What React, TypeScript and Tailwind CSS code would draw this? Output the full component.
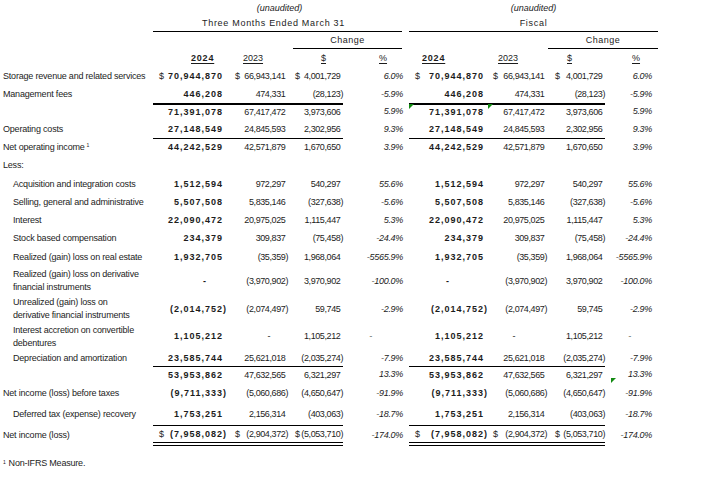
import React from 'react';

type Row = {
  label: string[];
  vals?: string[]; // a, b, c, d
  dollar?: boolean;
  indent?: boolean;
  sup?: boolean;
  h: string;
  top?: 'thin' | 'thick';
  double?: boolean;
};

const rows: Row[] = [
  { label: ['Storage revenue and related services'], vals: ['70,944,870', '66,943,141', '4,001,729', '6.0%'], dollar: true, h: 'h-[18px]' },
  { label: ['Management fees'], vals: ['446,208', '474,331', '(28,123)', '-5.9%'], h: 'h-[18px]' },
  { label: [''], vals: ['71,391,078', '67,417,472', '3,973,606', '5.9%'], h: 'h-[17px]', top: 'thick' },
  { label: ['Operating costs'], vals: ['27,148,549', '24,845,593', '2,302,956', '9.3%'], h: 'h-[18px]' },
  { label: ['Net operating income'], sup: true, vals: ['44,242,529', '42,571,879', '1,670,650', '3.9%'], h: 'h-[18px]', top: 'thin' },
  { label: ['Less:'], h: 'h-[19px]' },
  { label: ['Acquisition and integration costs'], indent: true, vals: ['1,512,594', '972,297', '540,297', '55.6%'], h: 'h-[18px]' },
  { label: ['Selling, general and administrative'], indent: true, vals: ['5,507,508', '5,835,146', '(327,638)', '-5.6%'], h: 'h-[18px]' },
  { label: ['Interest'], indent: true, vals: ['22,090,472', '20,975,025', '1,115,447', '5.3%'], h: 'h-[18px]' },
  { label: ['Stock based compensation'], indent: true, vals: ['234,379', '309,837', '(75,458)', '-24.4%'], h: 'h-[18px]' },
  { label: ['Realized (gain) loss on real estate'], indent: true, vals: ['1,932,705', '(35,359)', '1,968,064', '-5565.9%'], h: 'h-[20px]' },
  { label: ['Realized (gain) loss on derivative', 'financial instruments'], indent: true, vals: ['-', '(3,970,902)', '3,970,902', '-100.0%'], h: 'h-[28px]' },
  { label: ['Unrealized (gain) loss on', 'derivative financial instruments'], indent: true, vals: ['(2,014,752)', '(2,074,497)', '59,745', '-2.9%'], h: 'h-[28px]' },
  { label: ['Interest accretion on convertible', 'debentures'], indent: true, vals: ['1,105,212', '-', '1,105,212', '-'], h: 'h-[27px]' },
  { label: ['Depreciation and amortization'], indent: true, vals: ['23,585,744', '25,621,018', '(2,035,274)', '-7.9%'], h: 'h-[16px]' },
  { label: [''], vals: ['53,953,862', '47,632,565', '6,321,297', '13.3%'], h: 'h-[17px]', top: 'thin' },
  { label: ['Net income (loss) before taxes'], vals: ['(9,711,333)', '(5,060,686)', '(4,650,647)', '-91.9%'], h: 'h-[20px]' },
  { label: ['Deferred tax (expense) recovery'], indent: true, vals: ['1,753,251', '2,156,314', '(403,063)', '-18.7%'], h: 'h-[22px]' },
  { label: ['Net income (loss)'], vals: ['(7,958,082)', '(2,904,372)', '(5,053,710)', '-174.0%'], dollar: true, h: 'h-[21px]', top: 'thin', double: true },
];

type Col = { w: string; d: string; pr: string; dash: string };

// cell width, $ offset, right padding, padding used when the cell holds a dash
const leftCols: Col[] = [
  { w: 'w-[74px]', d: 'pl-[6px]', pr: 'pr-0', dash: 'pr-[20px]' },
  { w: 'w-[61px]', d: 'pl-[8px]', pr: 'pr-0', dash: 'pr-[18px]' },
  { w: 'w-[55px]', d: 'pl-[7px]', pr: 'pr-0', dash: 'pr-[22px]' },
  { w: 'w-[63px]', d: '', pr: 'pr-[3px]', dash: 'pr-[34px]' },
];
const rightCols: Col[] = [
  { w: 'w-[79px]', d: 'pl-[6px]', pr: 'pr-0', dash: 'pr-[38px]' },
  { w: 'w-[60px]', d: 'pl-[5px]', pr: 'pr-[1px]', dash: 'pr-[33px]' },
  { w: 'w-[57px]', d: 'pl-[7px]', pr: 'pr-0', dash: 'pr-[20px]' },
  { w: 'w-[53px]', d: '', pr: 'pr-[6px]', dash: 'pr-[27px]' },
];

function Cell({ v, i, col, row }: { v: string; i: number; col: Col; row: Row }) {
  const bold = i === 0;
  const pct = i === 3;
  const border =
    i < 3 && row.top === 'thick' ? 'border-t-2 border-black' : i < 3 && row.top === 'thin' ? 'border-t border-black' : '';
  const dbl = i < 3 && row.double ? 'border-b-[4px] border-double border-black' : '';
  // positives keep room for the closing paren so digits line up
  const hang = !pct && !v.startsWith('(') && v !== '-' && v !== '';
  const pr = v === '-' ? col.dash : col.pr;
  return (
    <div className={`flex h-full items-center justify-between ${col.w} ${border} ${dbl} ${pr}`}>
      <span className={col.d}>{row.dollar && !pct ? '$' : ''}</span>
      <span
        className={
          bold
            ? 'font-bold tracking-[1px]'
            : pct
            ? 'italic tracking-[-0.3px]'
            : 'tracking-[-0.4px]'
        }
      >
        {v}
        {hang && <span className="invisible">)</span>}
      </span>
    </div>
  );
}

function Block({ row, cols }: { row: Row; cols: Col[] }) {
  return (
    <div className="flex h-full">
      {cols.map((c, i) => (
        <Cell key={i} v={row.vals ? row.vals[i] : ''} i={i} col={c} row={row} />
      ))}
    </div>
  );
}

export default function App() {
  return (
    <div
      className="relative h-[478px] w-[723px] overflow-hidden bg-white text-[9px] leading-[11px] text-[#1c1c1c]"
      style={{ fontFamily: '"Liberation Sans", Arial, sans-serif' }}
    >
      {/* header */}
      <div className="flex h-[16px] items-center italic">
        <div className="w-[153px]" />
        <div className="w-[253px] text-center">(unaudited)</div>
        <div className="w-[3px]" />
        <div className="w-[249px] text-center">(unaudited)</div>
      </div>
      <div className="flex h-[16px]">
        <div className="w-[153px]" />
        <div className="mr-[4px] flex w-[249px] items-center justify-center border-b border-black pr-[8px] tracking-[0.7px]">
          Three Months Ended March 31
        </div>
        <div className="w-[3px]" />
        <div className="flex w-[249px] items-center justify-center border-b border-black tracking-[0.7px]">
          Fiscal
        </div>
      </div>
      <div className="flex h-[17px]">
        <div className="w-[153px]" />
        <div className="ml-[140px] flex w-[109px] items-center justify-center border-b border-black tracking-[0.5px]">
          Change
        </div>
        <div className="w-[7px]" />
        <div className="ml-[139px] flex w-[110px] items-center justify-center border-b border-black tracking-[0.5px]">
          Change
        </div>
      </div>
      <div className="flex h-[18px] items-center underline underline-offset-2">
        <div className="w-[153px]" />
        <div className="flex w-[253px]">
          <div className="w-[74px] pl-[38px] font-bold tracking-[0.8px]">2024</div>
          <div className="w-[61px] pl-[16px]">2023</div>
          <div className="w-[55px] pl-[33px]">$</div>
          <div className="w-[63px] pl-[36px]">%</div>
        </div>
        <div className="w-[3px]" />
        <div className="flex w-[249px]">
          <div className="w-[79px] pl-[13px] font-bold tracking-[0.8px]">2024</div>
          <div className="w-[60px] pl-[10px]">2023</div>
          <div className="w-[57px] pl-[19px]">$</div>
          <div className="w-[53px] pl-[27px]">%</div>
        </div>
      </div>

      {/* body */}
      {rows.map((r, k) => (
        <div key={k} className={`flex ${r.h}`}>
          <div
            className={`flex w-[153px] flex-col justify-center tracking-[-0.2px] ${r.indent ? 'pl-[13px]' : 'pl-[3px]'} ${
              r.label.length > 1 ? 'gap-[2px]' : ''
            }`}
          >
            {r.label.map((t, j) => (
              <span key={j}>
                {t}
                {r.sup && <sup className="ml-[2px] text-[5px]">1</sup>}
              </span>
            ))}
          </div>
          <div className="w-[253px]">
            <Block row={r} cols={leftCols} />
          </div>
          <div className="w-[3px]" />
          <div className="w-[252px]">
            <Block row={r} cols={rightCols} />
          </div>
        </div>
      ))}

      <div className="mt-[12px] pl-[3px] tracking-[-0.2px]">
        <sup className="mr-[3px] text-[5px]">1</sup>Non-IFRS Measure.
      </div>

      {/* excel error markers */}
      <div className="absolute left-[409px] top-[104px] h-0 w-0 border-r-[5px] border-t-[5px] border-r-transparent border-t-[#128a12]" />
      <div className="absolute left-[488px] top-[104px] h-0 w-0 border-r-[5px] border-t-[5px] border-r-transparent border-t-[#128a12]" />
      <div className="absolute left-[611px] top-[378px] h-0 w-0 border-r-[5px] border-t-[5px] border-r-transparent border-t-[#128a12]" />
    </div>
  );
}
